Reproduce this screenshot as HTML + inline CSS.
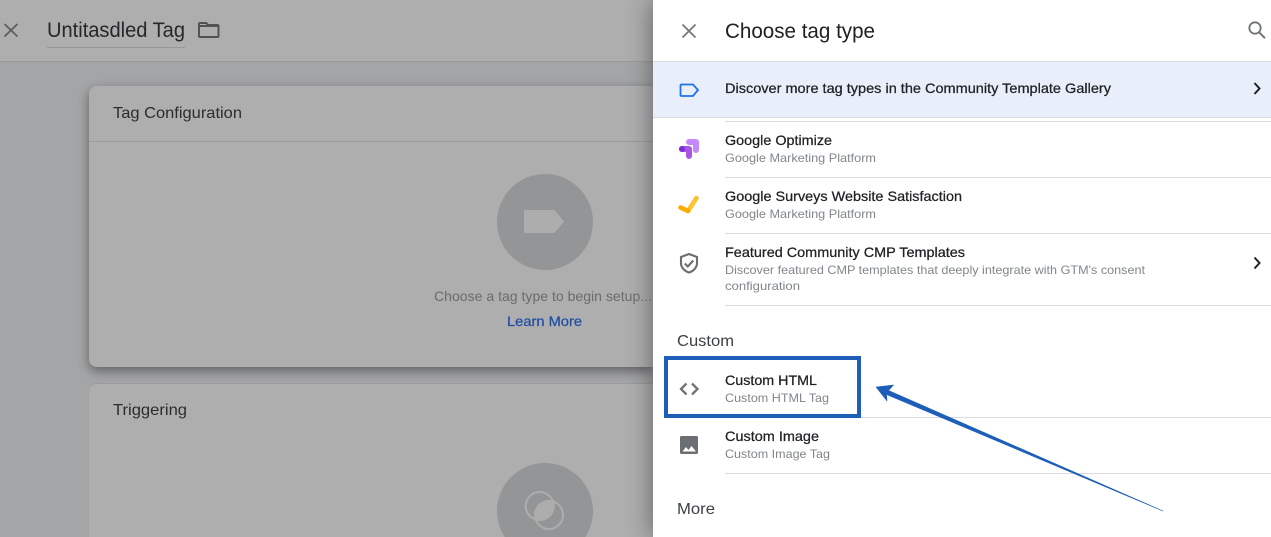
<!DOCTYPE html>
<html><head><meta charset="utf-8">
<style>
html,body{margin:0;padding:0;width:1271px;height:537px;overflow:hidden;background:#a4a5a7}
#w{position:relative;width:1271px;height:537px;overflow:hidden;background:#a4a5a7}
.a{position:absolute}
svg{display:block}
text{font-family:"Liberation Sans",sans-serif}
.m{stroke-width:.25px;paint-order:stroke}
</style></head>
<body>
<div id="w">
<div class="a" style="left:0;top:0;width:653px;height:61px;background:#aeaeae;border-bottom:1px solid #9a9a9a"></div>
<div class="a" style="left:89px;top:86px;width:564px;height:281px;background:#aeaeae;border-radius:8px 0 0 8px;box-shadow:0 4px 11px rgba(0,0,0,.42)"></div>
<div class="a" style="left:89px;top:141px;width:564px;height:1px;background:#9b9b9b"></div>
<div class="a" style="left:89px;top:383px;width:564px;height:153px;background:#aeaeae;border-radius:8px 0 0 0;border-top:1px solid #9b9b9b"></div>
<div class="a" style="left:653px;top:0;width:618px;height:537px;background:#fff;box-shadow:0 0 24px rgba(0,0,0,.45)"></div>
<svg class="a" style="left:0;top:0" width="1271" height="537" viewBox="0 0 1271 537">
<!-- left -->
<path d="M4.500 24l13 12.500M17.500 24L4.500 36.500" stroke="#5e5e5e" stroke-width="1.800" fill="none"/>
<text x="47" y="37" font-size="21" fill="#26272a" textLength="138" lengthAdjust="spacingAndGlyphs">Untitasdled Tag</text>
<rect x="47" y="47" width="138" height="1" fill="#979797"/>
<path d="M200 23h6.200l2 2h9.300q1 0 1 1v10q0 1-1 1h-17.500q-1 0-1-1v-12q0-1 1-1z" fill="none" stroke="#525252" stroke-width="2"/>
<rect x="200" y="25" width="18" height="2" fill="#525252"/>
<text x="113" y="118" font-size="16" fill="#2c2c2c" textLength="129" lengthAdjust="spacingAndGlyphs">Tag Configuration</text>
<text x="113" y="415" font-size="16" fill="#2c2c2c" textLength="74" lengthAdjust="spacingAndGlyphs">Triggering</text>
<circle cx="545" cy="222" r="48" fill="#949596"/>
<path d="M525 210h29.500l9.500 11.500-9.500 11.500H525q-1 0-1-1v-21q0-1 1-1z" fill="#adadad"/>
<text x="434" y="301" font-size="14" fill="#6b6b6b" textLength="218" lengthAdjust="spacingAndGlyphs">Choose a tag type to begin setup...</text>
<text x="507" y="326" font-size="14" fill="#1f4fa3" stroke="#1f4fa3" class="m" textLength="75" lengthAdjust="spacingAndGlyphs">Learn More</text>
<circle cx="545" cy="511" r="48" fill="#949596"/>
<clipPath id="c1"><circle cx="539.700" cy="506" r="14"/></clipPath>
<circle cx="549" cy="515" r="14" fill="#adadad" clip-path="url(#c1)"/>
<circle cx="539.700" cy="506" r="14" fill="none" stroke="#adadad" stroke-width="2"/>
<circle cx="549" cy="515" r="14" fill="none" stroke="#adadad" stroke-width="2"/>
<!-- panel -->
<path d="M682.500 24.500l13 13M695.500 24.500l-13 13" stroke="#70757a" stroke-width="1.700" fill="none"/>
<text x="725" y="38" font-size="21" fill="#202124" textLength="150" lengthAdjust="spacingAndGlyphs">Choose tag type</text>
<circle cx="1255" cy="28" r="5.700" fill="none" stroke="#70757a" stroke-width="1.800"/>
<path d="M1259 32.200l6 6" stroke="#70757a" stroke-width="2"/>
<rect x="653" y="61" width="618" height="1" fill="#dadce0"/>
<rect x="653" y="62" width="618" height="55" fill="#e8effb"/>
<rect x="653" y="117" width="618" height="1" fill="#dadce0"/>
<rect x="725" y="121" width="546" height="1" fill="#dadce0"/>
<path d="M681.500 84.500h11.500l5 5.500-5 6h-11.500q-1 0-1-1v-9.500q0-1 1-1z" fill="none" stroke="#1a73e8" stroke-width="1.800"/>
<text x="725" y="93" font-size="14" fill="#202124" stroke="#202124" class="m" textLength="386" lengthAdjust="spacingAndGlyphs">Discover more tag types in the Community Template Gallery</text>
<path d="M1254.500 83l5 5.500-5 5.500" fill="none" stroke="#202124" stroke-width="2"/>

<path d="M689 142h7v8" fill="none" stroke="#c58af9" stroke-width="6" stroke-linecap="round" stroke-linejoin="round"/>
<path d="M682 149h7v7" fill="none" stroke="#a855e8" stroke-width="6" stroke-linecap="round" stroke-linejoin="round"/>
<circle cx="682" cy="149" r="3" fill="#7b2fd0"/>
<text x="725" y="145" font-size="14" fill="#202124" stroke="#202124" class="m" textLength="107" lengthAdjust="spacingAndGlyphs">Google Optimize</text>
<text x="725" y="162" font-size="12" fill="#80868b" textLength="151" lengthAdjust="spacingAndGlyphs">Google Marketing Platform</text>
<rect x="725" y="177" width="546" height="1" fill="#dadce0"/>

<path d="M688 211L696.500 198" fill="none" stroke="#fcc32c" stroke-width="4.600" stroke-linecap="round"/>
<path d="M680.500 207.500l7.500 3.500" fill="none" stroke="#f9ab00" stroke-width="4.600" stroke-linecap="round"/>
<text x="725" y="201" font-size="14" fill="#202124" stroke="#202124" class="m" textLength="237" lengthAdjust="spacingAndGlyphs">Google Surveys Website Satisfaction</text>
<text x="725" y="218" font-size="12" fill="#80868b" textLength="151" lengthAdjust="spacingAndGlyphs">Google Marketing Platform</text>
<rect x="725" y="233" width="546" height="1" fill="#dadce0"/>

<path d="M689 254l8 3v6c0 4.500-3.400 8-8 9.500-4.600-1.500-8-5-8-9.500v-6z" fill="none" stroke="#6b6f73" stroke-width="2.100"/>
<path d="M684.800 263.500l3 3 5.500-6" fill="none" stroke="#6b6f73" stroke-width="2.100"/>
<text x="725" y="257" font-size="14" fill="#202124" stroke="#202124" class="m" textLength="240" lengthAdjust="spacingAndGlyphs">Featured Community CMP Templates</text>
<text x="725" y="274" font-size="12" fill="#80868b" textLength="420" lengthAdjust="spacingAndGlyphs">Discover featured CMP templates that deeply integrate with GTM's consent</text>
<text x="725" y="290" font-size="12" fill="#80868b" textLength="75" lengthAdjust="spacingAndGlyphs">configuration</text>
<path d="M1254.500 257.500l5 5.500-5 5.500" fill="none" stroke="#202124" stroke-width="2"/>
<rect x="725" y="305" width="546" height="1" fill="#dadce0"/>

<text x="677" y="346" font-size="16" fill="#3c4043" textLength="57" lengthAdjust="spacingAndGlyphs">Custom</text>

<path d="M686.500 383.500l-5.500 5.500 5.500 5.500M692 383.500l5.500 5.500-5.500 5.500" fill="none" stroke="#6f7377" stroke-width="2.300"/>
<text x="725" y="385" font-size="14" fill="#202124" stroke="#202124" class="m" textLength="92" lengthAdjust="spacingAndGlyphs">Custom HTML</text>
<text x="725" y="402" font-size="12" fill="#80868b" textLength="104" lengthAdjust="spacingAndGlyphs">Custom HTML Tag</text>
<rect x="725" y="417" width="546" height="1" fill="#dadce0"/>
<rect x="664" y="416" width="197" height="1.500" fill="#8a8f94"/>
<rect x="666" y="358" width="193" height="58" fill="none" stroke="#1d5eb8" stroke-width="4"/>

<rect x="680" y="436" width="18" height="18" rx="1.500" fill="#6b6f73"/>
<path d="M682.500 451.500l3.500-4.500 2.500 3 3-4 4.500 5.500z" fill="#fff"/>
<text x="725" y="441" font-size="14" fill="#202124" stroke="#202124" class="m" textLength="94" lengthAdjust="spacingAndGlyphs">Custom Image</text>
<text x="725" y="458" font-size="12" fill="#80868b" textLength="105" lengthAdjust="spacingAndGlyphs">Custom Image Tag</text>
<rect x="725" y="473" width="546" height="1" fill="#dadce0"/>

<text x="677" y="514" font-size="16" fill="#3c4043" textLength="38" lengthAdjust="spacingAndGlyphs">More</text>

<path d="M876 387L893.500 385 888.500 390.500 1163 511 886.500 394.500 887 401z" fill="#1d5eb8" stroke="#1d5eb8" stroke-width=".6" stroke-linejoin="round"/>
</svg>
</div>
</body></html>
